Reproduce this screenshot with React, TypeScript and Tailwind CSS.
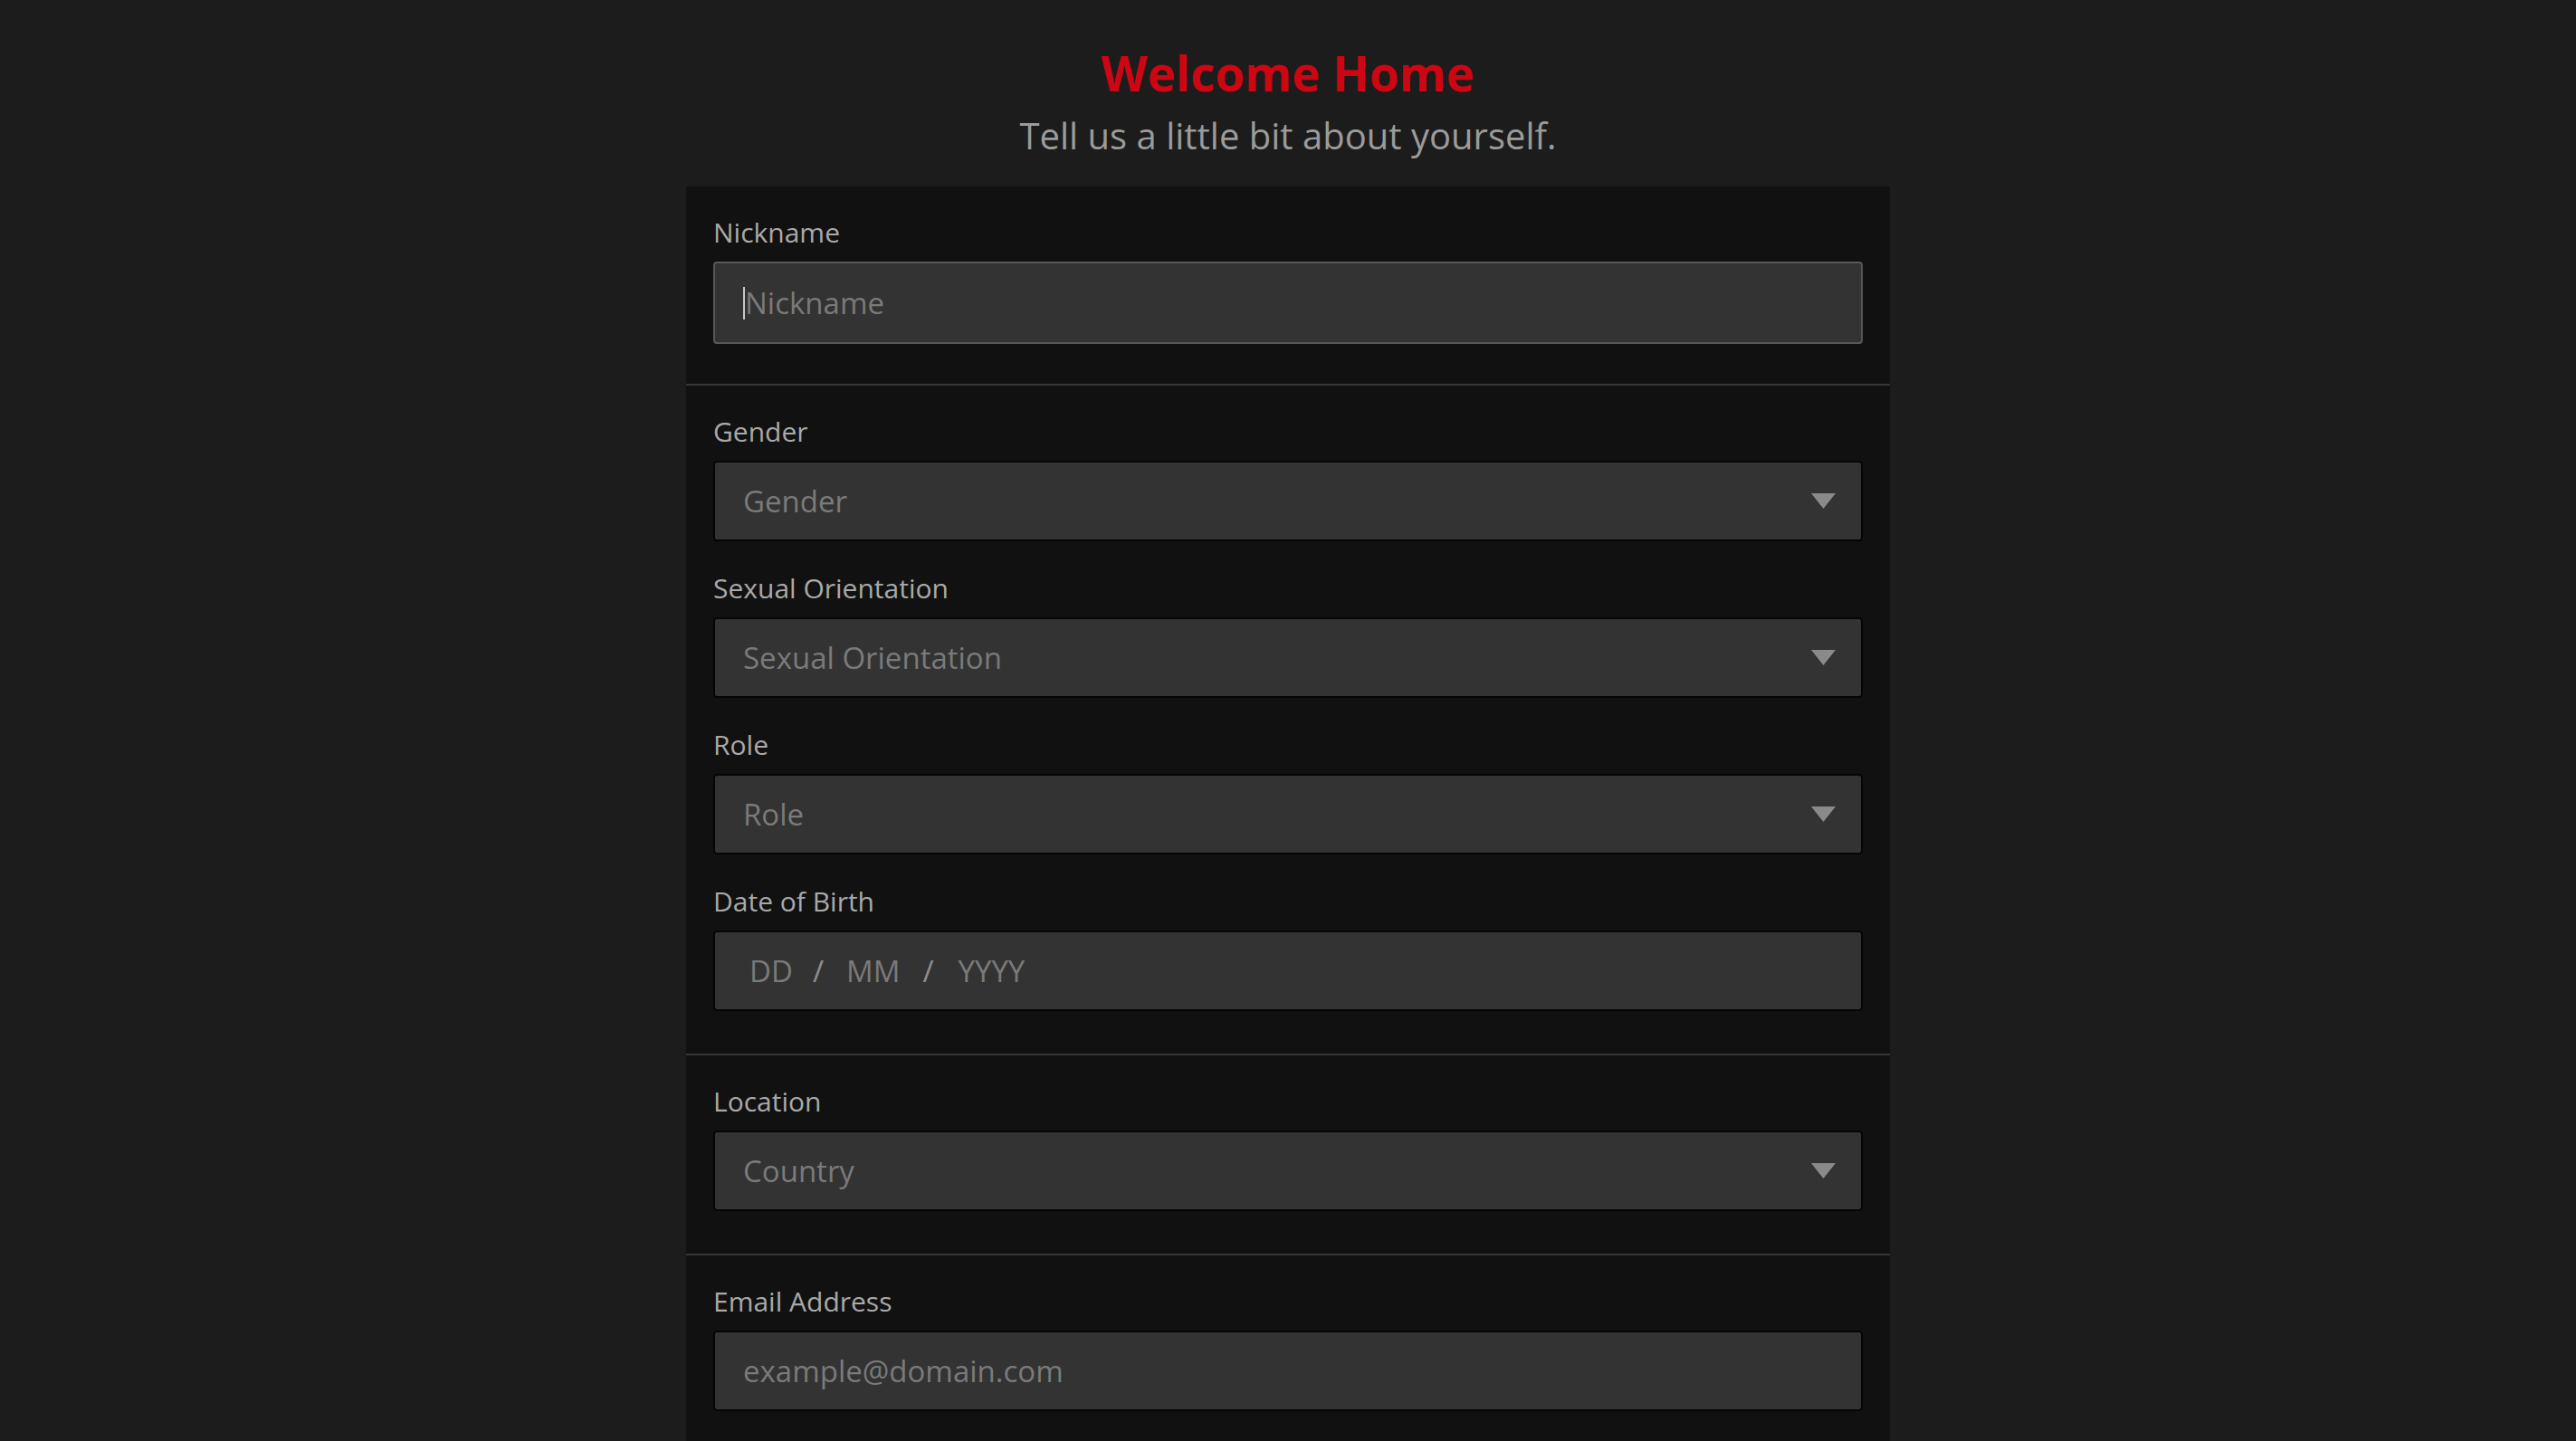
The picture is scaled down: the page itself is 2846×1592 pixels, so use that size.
import { ReactNode } from "react"

const font = { fontFamily: '"Open Sans", "Liberation Sans", sans-serif' }

function Label({ children }: { children: ReactNode }) {
  return <div className="mb-3 text-[30px] leading-[40px] text-[#a9a9a9]">{children}</div>
}

function Select({ placeholder }: { placeholder: string }) {
  return (
    <div className="flex h-[89px] w-full items-center justify-between rounded-[4px] border-2 border-[#050505] bg-[#333333] pl-[31px] pr-[28px]">
      <span className="text-[33px] text-[#7a7a7a]">{placeholder}</span>
      <svg width="27" height="17" viewBox="0 0 27 17">
        <path d="M0 0 L27 0 L13.5 17 Z" fill="#8a8a8a" />
      </svg>
    </div>
  )
}

function Section({ children }: { children: ReactNode }) {
  return <div className="flex flex-col gap-[32px] px-[30px] pt-[31px] pb-[47px]">{children}</div>
}

export default function App() {
  return (
    <div style={font} className="flex min-h-screen flex-col items-center bg-[#1c1c1c] pt-[48px]">
      <h1 className="text-[53px] font-bold leading-[65px] text-[#cc0613]">Welcome Home</h1>
      <p className="mt-[14px] text-[40px] leading-[46px] text-[#9b9b9b]">Tell us a little bit about yourself.</p>

      <form className="mt-[33px] w-[1330px] bg-[#111111]">
        {/* ニックネーム */}
        <div className="flex flex-col px-[30px] pt-[31px] pb-[44px]">
          <Label>Nickname</Label>
          <div className="flex h-[91px] items-center rounded-[4px] border-2 border-[#585858] bg-[#333333] pl-[31px]">
            <span className="h-[36px] w-[2px] bg-[#c8c8c8]" />
            <input
              placeholder="Nickname"
              className="flex-1 bg-transparent text-[33px] text-[#ccc] outline-none placeholder:text-[#7a7a7a]"
            />
          </div>
        </div>

        <div className="border-t-2 border-[#363636]" />

        {/* プロフィール */}
        <Section>
          <div>
            <Label>Gender</Label>
            <Select placeholder="Gender" />
          </div>
          <div>
            <Label>Sexual Orientation</Label>
            <Select placeholder="Sexual Orientation" />
          </div>
          <div>
            <Label>Role</Label>
            <Select placeholder="Role" />
          </div>
          <div>
            <Label>Date of Birth</Label>
            <div className="flex h-[89px] items-center rounded-[4px] border-2 border-[#050505] bg-[#333333] pl-[38px] text-[33px]">
              <span className="text-[#7a7a7a]">DD</span>
              <span className="ml-[22px] text-[#8e8e8e]">/</span>
              <span className="ml-[25px] text-[#7a7a7a]">MM</span>
              <span className="ml-[25px] text-[#8e8e8e]">/</span>
              <span className="ml-[27px] text-[#7a7a7a]">YYYY</span>
            </div>
          </div>
        </Section>

        <div className="border-t-2 border-[#363636]" />

        <Section>
          <div>
            <Label>Location</Label>
            <Select placeholder="Country" />
          </div>
        </Section>

        <div className="border-t-2 border-[#363636]" />

        <Section>
          <div>
            <Label>Email Address</Label>
            <input
              placeholder="example@domain.com"
              className="h-[89px] w-full rounded-[4px] border-2 border-[#050505] bg-[#333333] pl-[31px] text-[33px] text-[#ccc] outline-none placeholder:text-[#7a7a7a]"
            />
          </div>
        </Section>
      </form>
    </div>
  )
}
